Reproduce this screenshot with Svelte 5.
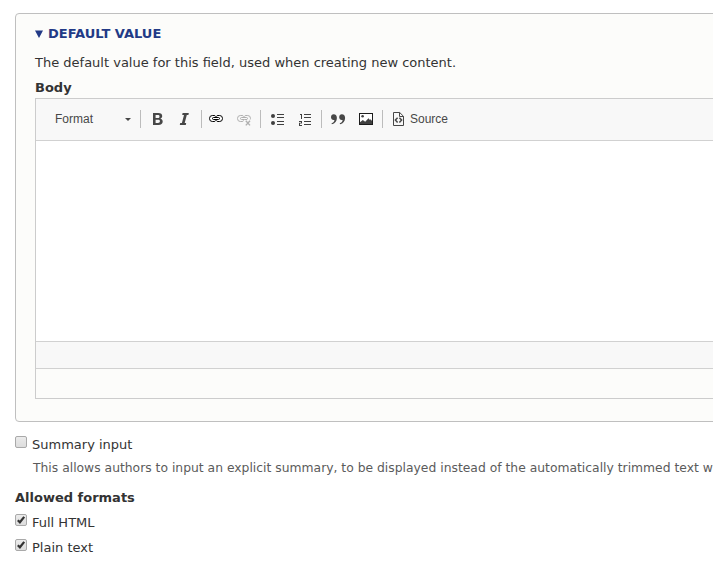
<script>
  let open = $state(true);
  let summary = $state(false);
  let formats = $state([
    { label: 'Full HTML', on: true },
    { label: 'Plain text', on: true }
  ]);
</script>

{#snippet box(on)}
  <svg class="box" width="12" height="12" viewBox="0 0 12 12" aria-hidden="true">
    <defs>
      <linearGradient id="face" x1="0" y1="0" x2="0" y2="1">
        <stop offset="0" stop-color="#ededed" />
        <stop offset=".4" stop-color="#e5e5e5" />
        <stop offset="1" stop-color="#dcdcdc" />
      </linearGradient>
    </defs>
    <rect x=".5" y=".5" width="11" height="11" rx="1.5" fill="url(#face)" stroke="#a9a9a9" />
    {#if on}
      <path d="M2.8 6.2 4.9 8.3 9.2 2.9" fill="none" stroke="#333" stroke-width="2.2" />
    {/if}
  </svg>
{/snippet}

<main>
  <section class="details">
    <button class="legend" onclick={() => (open = !open)}>
      <svg width="8" height="8" viewBox="0 0 8 8"><path d="M0 .4H8L4 8z" fill="#223a86" /></svg>
      <span>Default value</span>
    </button>
    {#if open}
      <p class="intro">The default value for this field, used when creating new content.</p>
      <div class="label">Body</div>
      <div class="editor">
        <div class="toolbar">
          <span class="combo">Format</span>
          <svg class="caret" width="6" height="3" viewBox="0 0 6 3"><path d="M0 0H6L3 3z" fill="#474747" /></svg>
          <i class="sep"></i>
          <svg class="bold" width="16" height="16" viewBox="0 0 16 16">
            <path fill="#474747" fill-rule="evenodd" d="M3 2H8.2C11 2 12.2 3.3 12.2 5 12.2 6.4 11.4 7.4 10.3 7.7 11.8 8 12.7 9.1 12.7 10.6 12.7 12.8 11.1 14 8.4 14H3zM5.6 4V6.9H7.8C8.9 6.9 9.5 6.4 9.5 5.4S8.9 4 7.8 4zM5.6 8.7V12H8C9.2 12 9.9 11.5 9.9 10.3S9.2 8.7 8 8.7z" />
          </svg>
          <svg class="italic" width="16" height="16" viewBox="0 0 16 16">
            <path fill="#474747" d="M6.6 2H12.8L12.4 3.9H10.8L8.7 12.1H10.2L9.8 14H3.8L4.2 12.1H5.9L8 3.9H6.2z" />
          </svg>
          <i class="sep"></i>
          <svg class="link" width="16" height="16" viewBox="0 0 16 16" fill="none">
            <rect x="1.2" y="3.7" width="13.6" height="7.6" rx="3.6" fill="#fff" />
            <g stroke="#000">
              <path d="M7.5 5.6V5.2Q7.1 4.5 6 4.5H4.3Q1.5 4.5 1.5 7.5T4.3 10.5H6Q7.1 10.5 7.5 9.8V9.4M8.5 5.6V5.2Q8.9 4.5 10 4.5H11.7Q14.5 4.5 14.5 7.5T11.7 10.5H10Q8.9 10.5 8.5 9.8V9.4" />
              <rect x="4.5" y="6.5" width="7" height="2" rx="1" />
            </g>
          </svg>
          <svg class="unlink" width="16" height="16" viewBox="0 0 16 16" fill="none" stroke="#b0b0b0">
            <path d="M7.5 5.6V5.2Q7.1 4.5 6 4.5H4.3Q1.5 4.5 1.5 7.5T4.3 10.5H6Q7.1 10.5 7.5 9.8V9.4M8.5 5.6V5.2Q8.9 4.5 10 4.5H11.7Q14.5 4.5 14.5 7.5L14.2 8.5M8.6 8.5H5.5Q4.5 8.5 4.5 7.5T5.5 6.5H10.5Q11.5 6.5 11.5 7.5L11 8.5H8.5" />
            <path stroke-width="1.4" d="M9.8 9.8 14 14.4M14 9.8 9.8 14.4" />
          </svg>
          <i class="sep s8"></i>
          <svg class="bullets" width="16" height="16" viewBox="0 0 16 16">
            <g fill="#404040"><circle cx="3" cy="5" r="2" /><circle cx="3" cy="12" r="2" />
              <path d="M7 3h7v1H7zM7 6h7v1H7zM7 10h7v1H7zM7 13h7v1H7z" /></g>
          </svg>
          <svg class="numbers" width="16" height="16" viewBox="0 0 16 16">
            <path fill="#404040" d="M2 3H4V8H3V4H2zM1 10H4V12.5H2V14H4V15H1V11.7H3V11H1zM6 3h7v1H6zM6 6h7v1H6zM6 10h7v1H6zM6 13h7v1H6z" />
          </svg>
          <i class="sep s7"></i>
          <svg class="quote" width="16" height="16" viewBox="0 0 16 16">
            <g fill="#474747">
              <path d="M3.6 3.2C5.8 3.2 6.9 4.7 6.9 7 6.9 10 5 12.5 1.9 13.3L1.5 12.3C3.4 11.5 4.4 10.3 4.4 8.9 2.5 9.4 1 8.1 1 6.2 1 4.4 2.1 3.2 3.6 3.2z" />
              <path d="M11.8 3.2C14 3.2 15.1 4.7 15.1 7 15.1 10 13.2 12.5 10.1 13.3L9.7 12.3C11.6 11.5 12.6 10.3 12.6 8.9 10.7 9.4 9.2 8.1 9.2 6.2 9.2 4.4 10.3 3.2 11.8 3.2z" />
            </g>
          </svg>
          <svg class="image" width="16" height="16" viewBox="0 0 16 16">
            <rect x="1.5" y="2.5" width="13" height="11" fill="#fff" stroke="#1c1c1c" />
            <circle cx="4.6" cy="5.3" r="1.3" fill="#404040" />
            <path fill="#404040" d="M2 13V11.2L4.8 9 7.2 10.8 10.5 7.2 11.9 8.9 12.7 8.3 14 10V13z" />
          </svg>
          <i class="sep s8"></i>
          <svg class="code" width="16" height="16" viewBox="0 0 16 16" fill="none" stroke="#474747">
            <path d="M2.5 1.5H8.7L12.5 5.3V14.5H2.5zM8.5 1.5V5.5H12.5" />
            <path stroke-width="1.5" d="M6.6 6.8 4.4 9.1 6.6 11.4M8.4 6.8 10.6 9.1 8.4 11.4" />
          </svg>
          <span class="source">Source</span>
        </div>
        <div class="content"></div>
        <div class="status"></div>
      </div>
    {/if}
  </section>

  <button class="choice first" onclick={() => (summary = !summary)}>{@render box(summary)}<span>Summary input</span></button>
  <p class="hint">This allows authors to input an explicit summary, to be displayed instead of the automatically trimmed text w</p>
  <h4>Allowed formats</h4>
  {#each formats as f}
    <button class="choice" onclick={() => (f.on = !f.on)}>{@render box(f.on)}<span>{f.label}</span></button>
  {/each}
</main>

<style>
  :global(body) { background: #fff; }
  main {
    box-sizing: border-box;
    height: 567px;
    padding: 13px 0 0 15px;
    overflow: hidden;
    color: #333;
    font: 13px/19px "DejaVu Sans", sans-serif;
  }
  svg { display: block; flex: none; }
  button { padding: 0; border: 0; background: none; color: inherit; font: inherit; text-align: left; }
  .details {
    box-sizing: border-box;
    width: 760px;
    height: 409px;
    padding: 10px 19px 0;
    border: 1px solid #bfbfbf;
    border-radius: 4px;
    background: #fcfcfa;
  }
  .legend {
    display: flex;
    align-items: center;
    gap: 5px;
    height: 19px;
    color: #223a86;
    font-weight: bold;
    text-transform: uppercase;
  }
  .intro { margin: 10px 0 0; white-space: nowrap; }
  .label { margin-top: 6px; height: 20px; font-weight: bold; }
  .editor {
    box-sizing: border-box;
    height: 301px;
    border: 1px solid #ccc;
  }
  .toolbar {
    display: flex;
    align-items: center;
    box-sizing: border-box;
    height: 42px;
    padding-bottom: 1px;
    border-bottom: 1px solid #d1d1d1;
    background: #f8f8f8;
    color: #484848;
    font: 12px/16px "Liberation Sans", Arial, sans-serif;
  }
  .combo { width: 70px; margin-left: 19px; }
  .caret { margin-top: 1px; }
  .sep { flex: none; width: 1px; height: 18px; margin-left: 9px; background: #bcbcbc; }
  .s8 { margin-left: 8px; }
  .s7 { margin-left: 7px; }
  .bold { margin-left: 9px; }
  .italic { margin-left: 10px; }
  .link { margin-left: 6px; }
  .unlink { margin-left: 12px; }
  .bullets { margin-left: 9px; }
  .numbers { margin-left: 12px; }
  .quote { margin-left: 8px; }
  .image { margin-left: 12px; }
  .code { margin-left: 8px; }
  .source { margin-left: 3px; }
  .content { height: 200px; background: #fff; }
  .status { height: 26px; border: solid #d1d1d1; border-width: 1px 0; background: #f8f8f8; }
  .choice { display: flex; gap: 5px; height: 19px; margin-top: 6px; }
  .choice.first { margin-top: 13px; }
  .box { margin-top: 1px; }
  .choice span { line-height: 19px; }
  .hint {
    margin: 6px 0 0 18px;
    color: #5b5b5b;
    font-size: 12.35px;
    line-height: 17px;
    white-space: nowrap;
  }
  h4 { margin: 11px 0 0; font-size: 13px; line-height: 19px; }
</style>
